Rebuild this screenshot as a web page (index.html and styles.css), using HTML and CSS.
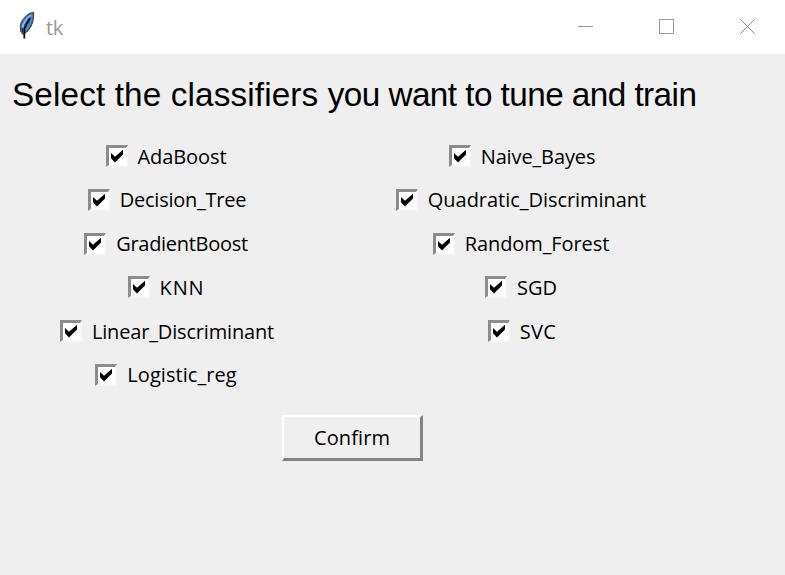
FILE: index.html
```
<!DOCTYPE html>
<html lang="en">
<head>
<meta charset="utf-8">
<title>tk</title>
<link rel="stylesheet" href="styles.css">
</head>
<body>
<svg class="defs" width="0" height="0" aria-hidden="true">
  <symbol id="check" viewBox="3 3 17 17"><path d="M5 8 L9 11.8 L17 4.8 V9.6 L9 17.4 L5 13.3 Z" fill="#000"/></symbol>
</svg>
<header class="titlebar">
  <svg class="feather" width="18" height="30" viewBox="0 0 18 30">
    <path d="M14.8 1.5 C10 2.5 4 8 2.5 14 L2.7 20 L5 23 L9.5 20 C13.5 15.5 16 9 15.5 2 Z" fill="#4888ce" stroke="#4a4f55" stroke-width="1.4"/>
    <path d="M13 4 C10 6 6 11 4.3 17" fill="none" stroke="#8fc0f0" stroke-width="1.5"/>
    <path d="M12 7 L9 12 M9 12 L6.5 17 L6.3 27.5" fill="none" stroke="#05080c" stroke-width="1.8"/>
    <path d="M10 9 L11 12 M7 13 L8.5 16 M4 17 L5 21" stroke="#16304d" stroke-width="1.4"/>
  </svg>
  <span class="title">tk</span>
  <div class="controls">
    <svg width="16" height="16"><path d="M0 7.5H15" stroke="#999"/></svg>
    <svg width="16" height="16"><rect x=".5" y=".5" width="14" height="14" fill="none" stroke="#999"/></svg>
    <svg width="16" height="16"><path d="M.3 .3L14.7 14.7M14.7 .3L.3 14.7" stroke="#888"/></svg>
  </div>
</header>
<main class="content">
  <h1><span class="lead">Select the classifiers </span>you want to tune and train</h1>
  <div class="options">
    <div class="column">
      <label class="option nudge"><svg class="box"><use href="#check"/></svg><span class="ada">AdaBoost</span></label>
      <label class="option"><svg class="box"><use href="#check"/></svg><span class="tree">Decision_Tree</span></label>
      <label class="option nudge"><svg class="box"><use href="#check"/></svg><span class="gradient">GradientBoost</span></label>
      <label class="option nudge"><svg class="box"><use href="#check"/></svg><span class="knn">KNN</span></label>
      <label class="option"><svg class="box"><use href="#check"/></svg><span class="linear">Linear_Discriminant</span></label>
      <label class="option nudge"><svg class="box"><use href="#check"/></svg><span class="logistic">Logistic_reg</span></label>
    </div>
    <div class="column">
      <label class="option nudge-right"><svg class="box"><use href="#check"/></svg><span class="bayes">Naive_Bayes</span></label>
      <label class="option"><svg class="box"><use href="#check"/></svg><span class="quadratic">Quadratic_Discriminant</span></label>
      <label class="option"><svg class="box"><use href="#check"/></svg><span class="forest">Random_Forest</span></label>
      <label class="option"><svg class="box"><use href="#check"/></svg><span class="sgd">SGD</span></label>
      <label class="option nudge-right"><svg class="box"><use href="#check"/></svg><span class="svc">SVC</span></label>
    </div>
  </div>
  <button class="confirm">Confirm</button>
</main>
</body>
</html>
```
FILE: styles.css
```
* { box-sizing: border-box; }
body { margin: 0; width: 785px; height: 575px; overflow: hidden; background: #efefef; color: #000; font-family: "Open Sans", "Noto Sans", sans-serif; }
.defs { display: block; }
.titlebar { height: 54px; background: #fff; display: flex; align-items: center; padding: 0 29px 0 18px; }
.feather { margin-top: -3px; }
.title { margin-left: 10px; font-size: 20px; color: #999; letter-spacing: -0.3px; }
.controls { margin-left: auto; display: flex; gap: 65px; }
.controls svg { display: block; }
.content { width: 708px; display: flex; flex-direction: column; }
h1 { margin: 21px 0 0 12px; height: 40px; font: 400 33.3px/40px "Liberation Sans", Arial, sans-serif; letter-spacing: -0.56px; white-space: nowrap; }
.lead { letter-spacing: 0.13px; }
.options { display: grid; grid-template-columns: 334px 374px; margin-top: 19px; height: 263px; }
.column { display: grid; grid-template-rows: repeat(6, 43.8px); }
.option { display: flex; justify-content: center; align-items: center; height: 44px; font-size: 20px; white-space: nowrap; }
.nudge { padding-right: 2px; }
.nudge-right { padding-left: 2px; }
.ada { letter-spacing: -0.1px; }
.tree { letter-spacing: -0.25px; }
.gradient { letter-spacing: -0.3px; }
.knn { letter-spacing: 0.8px; }
.linear { letter-spacing: -0.17px; }
.logistic { letter-spacing: 0.05px; }
.bayes { letter-spacing: -0.13px; }
.quadratic { letter-spacing: -0.04px; }
.forest { letter-spacing: -0.1px; }
.sgd { letter-spacing: 0; }
.svc { letter-spacing: 0.4px; }
.box { width: 22px; height: 22px; margin-right: 10px; background: #fff; border: solid; border-width: 3px 2px 2px 3px; border-color: #8c8c8c #f7f7f7 #f7f7f7 #8c8c8c; }
.confirm { margin: 18px 0 0 282px; width: 141px; height: 46px; padding: 0; border: solid; border-width: 2px 3px 3px 2px; border-color: #fff #838383 #838383 #fff; background: #efefef; color: #000; font: 400 20px "Open Sans", sans-serif; letter-spacing: 0.1px; }
```
